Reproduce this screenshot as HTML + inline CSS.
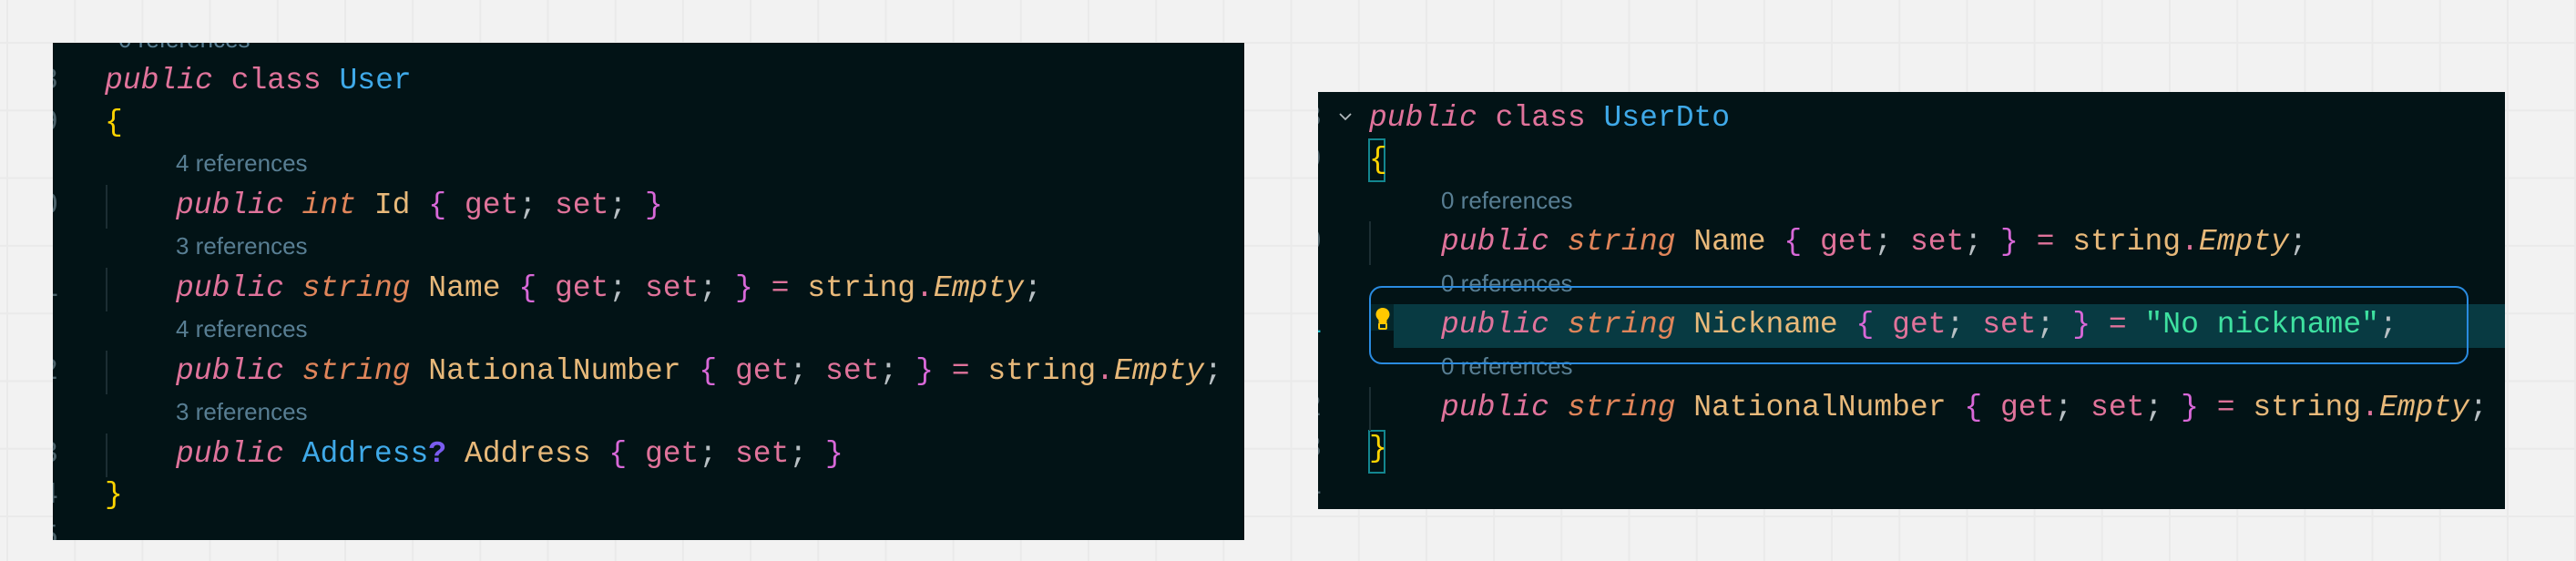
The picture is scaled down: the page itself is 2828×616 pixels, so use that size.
<!DOCTYPE html>
<html><head><meta charset="utf-8"><style>
html,body{margin:0;padding:0}
body{width:2828px;height:616px;position:relative;overflow:hidden;background:#f2f2f2;
background-image:linear-gradient(to right,#eaeaea 2px,transparent 2px),linear-gradient(to bottom,#eaeaea 2px,transparent 2px);
background-size:74.2px 74.3px;background-position:7px 46px;}
.p{position:absolute;background:#021316;overflow:hidden}
.r{position:absolute;left:0;right:0;height:45.5px;line-height:45.5px;margin-top:4px;white-space:pre;font-family:"Liberation Mono",monospace;font-size:33px;color:#c8c8c8}
.ln{position:absolute;width:60px;text-align:right;color:#4a6068;font-family:"Liberation Mono",monospace;font-size:33px}
.c{position:absolute}
.ref{font-family:"Liberation Sans",sans-serif;font-size:26px;color:#587e93}
.g{position:absolute;width:2px;background:#1c2e33}
.k{color:#e0739b;font-style:italic}
.kw{color:#e0739b}
.t{color:#e0855a;font-style:italic}
.ty{color:#3fa9e8}
.n{color:#e8b97a}
.b{color:#d868d8}
.y{color:#ffd400}
.gs{color:#e0739b}
.s{color:#3ee0a0}
.sm{color:#b8c0c4}
.q{color:#7a5cf0;font-weight:bold}
.em{color:#e8b97a;font-style:italic}
</style></head><body>

<div class="p" style="left:58px;top:47px;width:1308px;height:546px">
  <div class="r" style="top:-30.25px"><span class="c ref" style="left:72px">0 references</span></div>
  <div class="r" style="top:15.25px"><span class="ln" style="left:-54px">8</span><span class="c" style="left:57px"><span class="k">public</span> <span class="kw">class</span> <span class="ty">User</span></span></div>
  <div class="r" style="top:60.75px"><span class="ln" style="left:-54px">9</span><span class="c y" style="left:57px">{</span></div>
  <div class="r" style="top:106.25px"><span class="c ref" style="left:135px">4 references</span></div>
  <div class="g" style="left:58px;top:156px;height:48px"></div>
  <div class="r" style="top:151.75px"><span class="ln" style="left:-54px">0</span><span class="c" style="left:135px"><span class="k">public</span> <span class="t">int</span> <span class="n">Id</span> <span class="b">{</span> <span class="gs">get</span><span class="sm">;</span> <span class="gs">set</span><span class="sm">;</span> <span class="b">}</span></span></div>
  <div class="r" style="top:197.25px"><span class="c ref" style="left:135px">3 references</span></div>
  <div class="g" style="left:58px;top:247px;height:48px"></div>
  <div class="r" style="top:242.75px"><span class="ln" style="left:-54px">1</span><span class="c" style="left:135px"><span class="k">public</span> <span class="t">string</span> <span class="n">Name</span> <span class="b">{</span> <span class="gs">get</span><span class="sm">;</span> <span class="gs">set</span><span class="sm">;</span> <span class="b">}</span> <span class="gs">=</span> <span class="n">string</span><span class="gs">.</span><span class="em">Empty</span><span class="sm">;</span></span></div>
  <div class="r" style="top:288.25px"><span class="c ref" style="left:135px">4 references</span></div>
  <div class="g" style="left:58px;top:338px;height:48px"></div>
  <div class="r" style="top:333.75px"><span class="ln" style="left:-54px">2</span><span class="c" style="left:135px"><span class="k">public</span> <span class="t">string</span> <span class="n">NationalNumber</span> <span class="b">{</span> <span class="gs">get</span><span class="sm">;</span> <span class="gs">set</span><span class="sm">;</span> <span class="b">}</span> <span class="gs">=</span> <span class="n">string</span><span class="gs">.</span><span class="em">Empty</span><span class="sm">;</span></span></div>
  <div class="r" style="top:379.25px"><span class="c ref" style="left:135px">3 references</span></div>
  <div class="g" style="left:58px;top:429px;height:48px"></div>
  <div class="r" style="top:424.75px"><span class="ln" style="left:-54px">3</span><span class="c" style="left:135px"><span class="k">public</span> <span class="ty">Address</span><span class="q">?</span> <span class="n">Address</span> <span class="b">{</span> <span class="gs">get</span><span class="sm">;</span> <span class="gs">set</span><span class="sm">;</span> <span class="b">}</span></span></div>
  <div class="r" style="top:470.25px"><span class="ln" style="left:-54px">4</span><span class="c y" style="left:57px">}</span></div>
  <div class="r" style="top:515.75px"><span class="ln" style="left:-54px">5</span></div>
</div>

<div class="p" style="left:1447px;top:101px;width:1303px;height:458px">
  <div style="position:absolute;left:83px;right:0;top:233px;height:48px;background:#083a42"></div>
  <div style="position:absolute;left:56px;width:27px;top:233px;height:29px;background:#04262b"></div>
  <svg style="position:absolute;left:62px;top:236px" width="18" height="26" viewBox="0 0 18 26"><path d="M9 1C4.5 1 1.5 4.3 1.5 8.3c0 3 1.8 4.6 3 6.2V17h9v-2.5c1.2-1.6 3-3.2 3-6.2C16.5 4.3 13.5 1 9 1z" fill="#ffc800"/><rect x="5" y="18" width="8" height="6" rx="1" fill="none" stroke="#ffc800" stroke-width="2"/></svg>
  <div style="position:absolute;left:55px;top:51px;width:15px;height:44px;border:2px solid #13868f"></div>
  <div style="position:absolute;left:55px;top:371px;width:15px;height:44px;border:2px solid #13868f"></div>
  <div class="r" style="top:2.25px"><span class="ln" style="left:-56px">8</span><svg style="position:absolute;left:22px;top:15px" width="16" height="12" viewBox="0 0 16 12"><path d="M2 3l6 6 6-6" fill="none" stroke="#b0b8bc" stroke-width="1.8"/></svg><span class="c" style="left:56px"><span class="k">public</span> <span class="kw">class</span> <span class="ty">UserDto</span></span></div>
  <div class="r" style="top:47.65px"><span class="ln" style="left:-56px">9</span><span class="c y" style="left:56px">{</span></div>
  <div class="r" style="top:93.05px"><span class="c ref" style="left:135px">0 references</span></div>
  <div class="g" style="left:56px;top:142px;height:48px"></div>
  <div class="r" style="top:138.45px"><span class="ln" style="left:-56px">0</span><span class="c" style="left:135px"><span class="k">public</span> <span class="t">string</span> <span class="n">Name</span> <span class="b">{</span> <span class="gs">get</span><span class="sm">;</span> <span class="gs">set</span><span class="sm">;</span> <span class="b">}</span> <span class="gs">=</span> <span class="n">string</span><span class="gs">.</span><span class="em">Empty</span><span class="sm">;</span></span></div>
  <div class="r" style="top:183.85px"><span class="c ref" style="left:135px">0 references</span></div>
  <div class="r" style="top:229.25px"><span class="ln" style="left:-56px;color:#1fb8c8">1</span><span class="c" style="left:135px"><span class="k">public</span> <span class="t">string</span> <span class="n">Nickname</span> <span class="b">{</span> <span class="gs">get</span><span class="sm">;</span> <span class="gs">set</span><span class="sm">;</span> <span class="b">}</span> <span class="gs">=</span> <span class="s">"No nickname"</span><span class="sm">;</span></span></div>
  <div class="r" style="top:274.65px"><span class="c ref" style="left:135px">0 references</span></div>
  <div class="g" style="left:56px;top:324px;height:48px"></div>
  <div class="r" style="top:320.05px"><span class="ln" style="left:-56px">2</span><span class="c" style="left:135px"><span class="k">public</span> <span class="t">string</span> <span class="n">NationalNumber</span> <span class="b">{</span> <span class="gs">get</span><span class="sm">;</span> <span class="gs">set</span><span class="sm">;</span> <span class="b">}</span> <span class="gs">=</span> <span class="n">string</span><span class="gs">.</span><span class="em">Empty</span><span class="sm">;</span></span></div>
  <div class="r" style="top:365.45px"><span class="ln" style="left:-56px">3</span><span class="c y" style="left:56px">}</span></div>
  <div class="r" style="top:410.85px"><span class="ln" style="left:-56px">4</span></div>
  <div style="position:absolute;left:56px;top:213px;width:1203px;height:82px;border:2px solid #2a8be0;border-radius:14px"></div>
</div>
</body></html>
